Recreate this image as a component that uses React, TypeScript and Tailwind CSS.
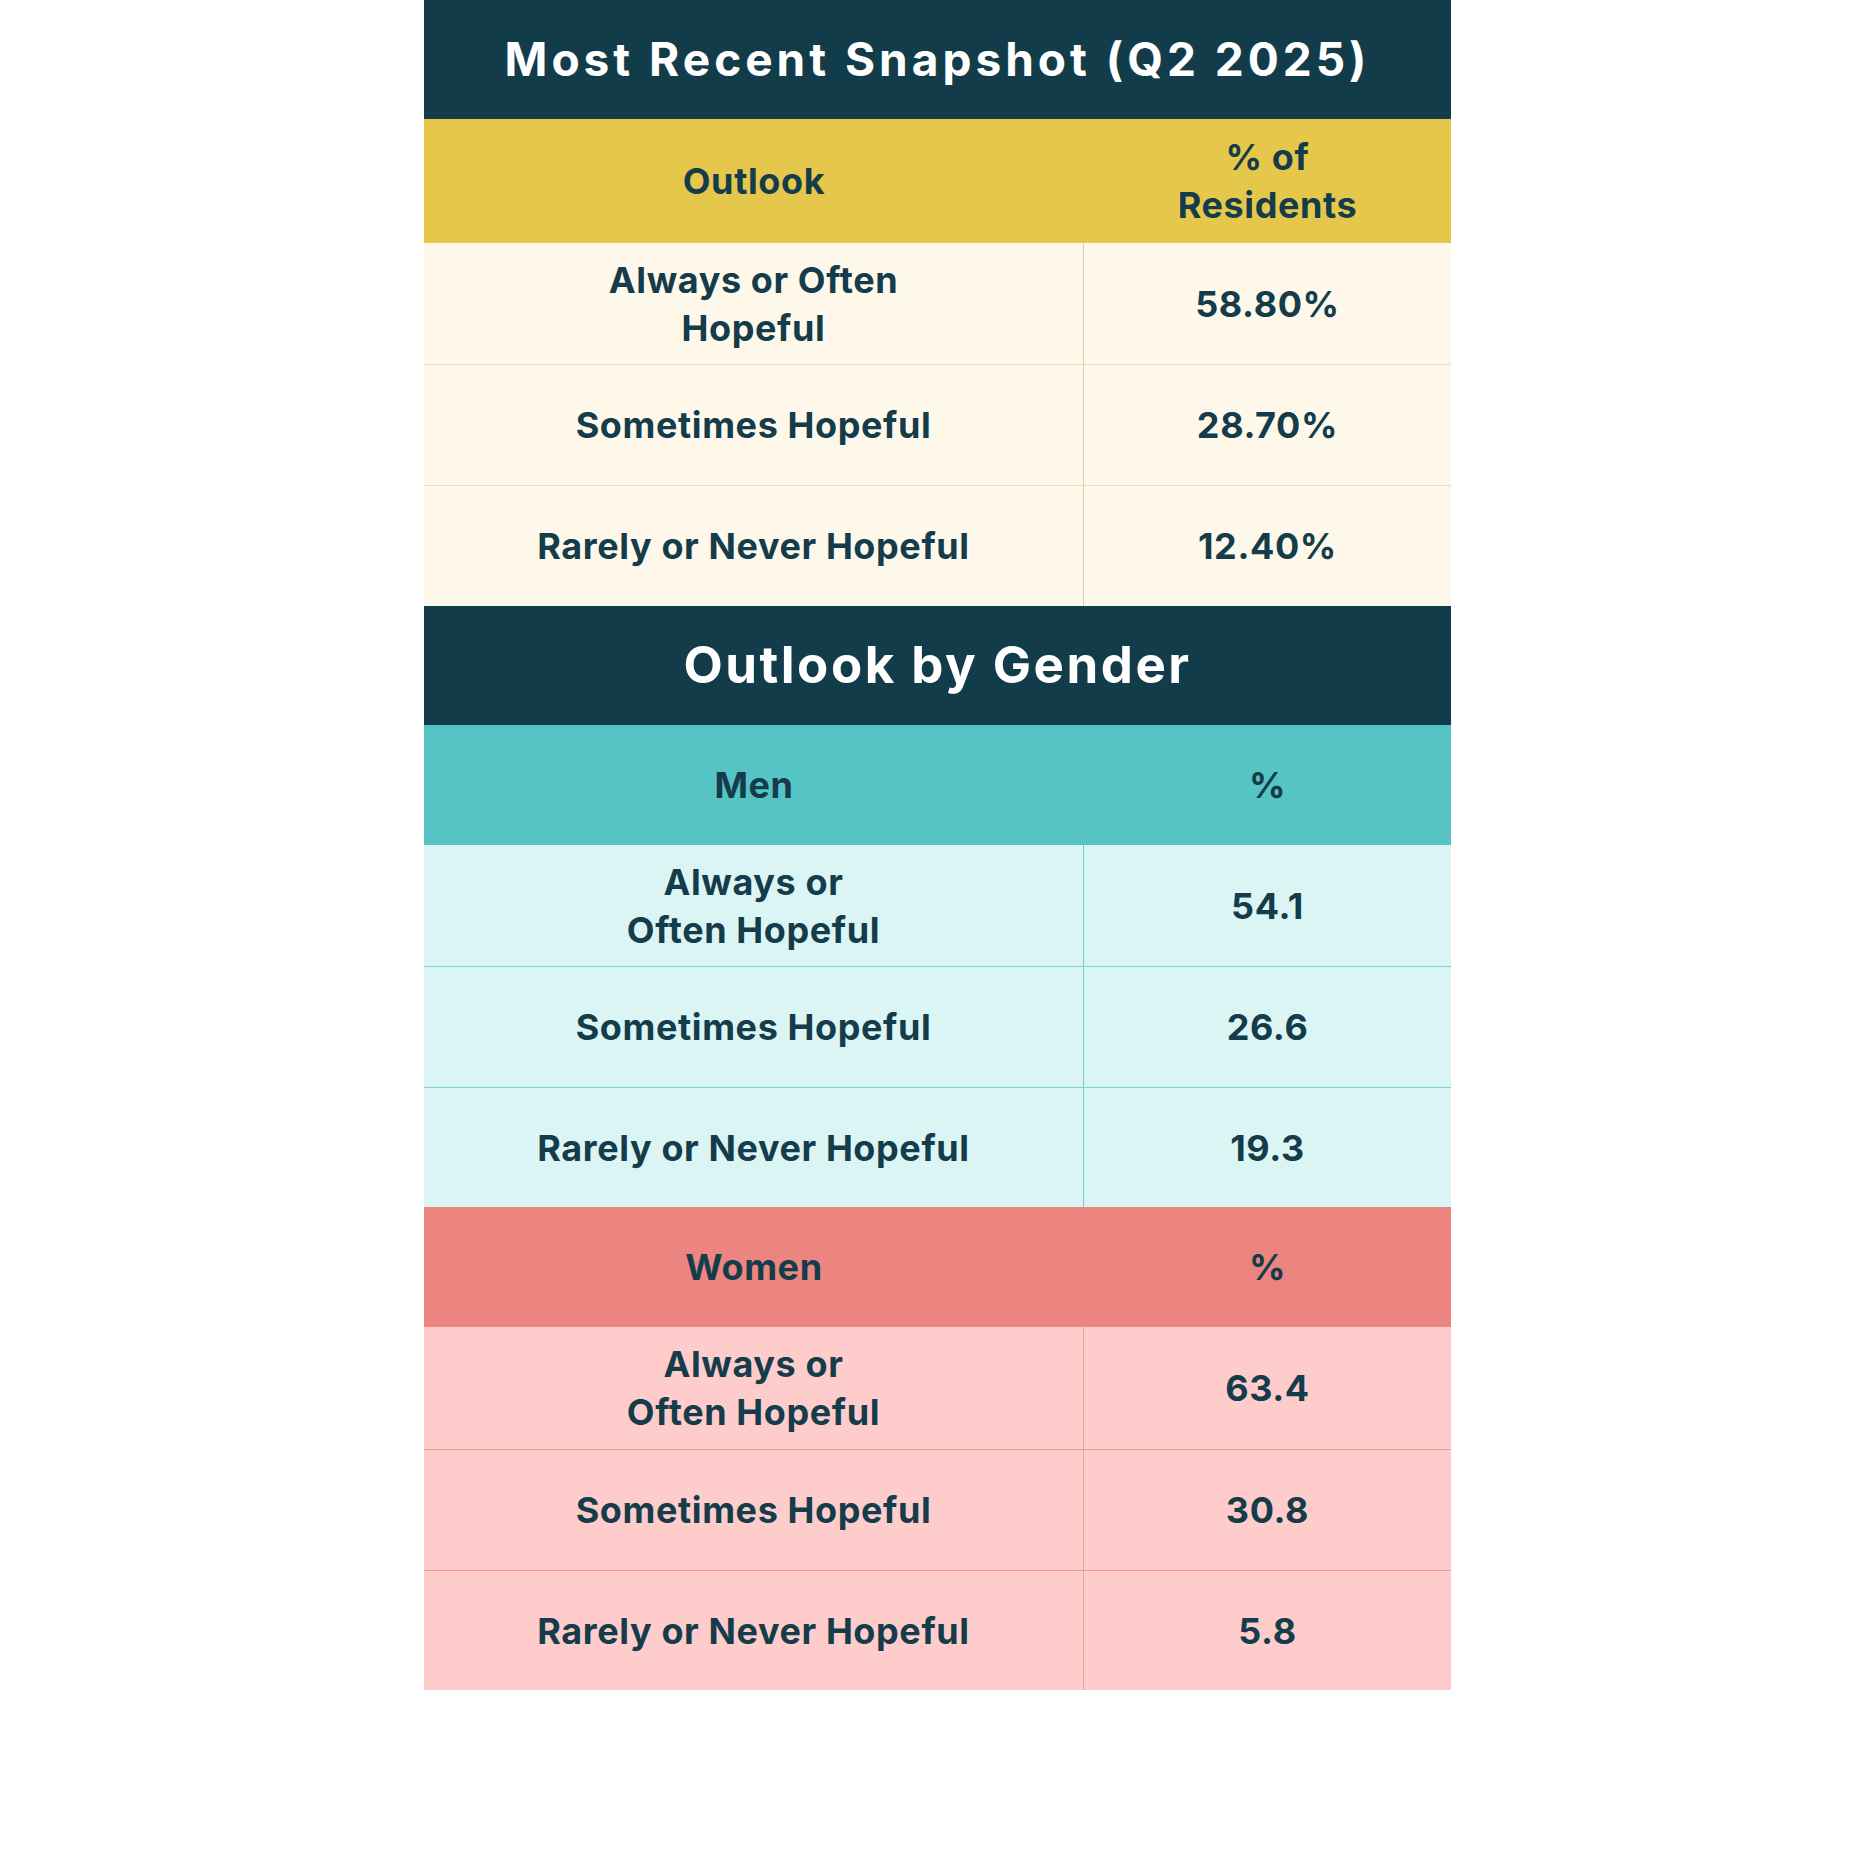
type Row = { label: React.ReactNode; value: string; h: string };

const font = { fontFamily: "Inter, 'Noto Sans', sans-serif" };

function Title({ text, h, size }: { text: string; h: string; size: string }) {
  return (
    <div className={`flex items-center justify-center bg-[#133c4a] text-white font-bold ${size} ${h}`}>
      {text}
    </div>
  );
}

function Section({
  head,
  rows,
  headBg,
  rowBg,
  line,
  vline,
  headH,
}: {
  head: [React.ReactNode, string];
  rows: Row[];
  headBg: string;
  rowBg: string;
  line: string;
  vline: string;
  headH: string;
}) {
  return (
    <div>
      <div className={`grid grid-cols-[660px_1fr] ${headBg} ${headH}`}>
        <div className="flex items-center justify-center text-center leading-[48px]">{head[0]}</div>
        <div className="flex items-center justify-center text-center leading-[48px]">{head[1]}</div>
      </div>
      {rows.map((r, i) => (
        <div
          key={i}
          className={`grid grid-cols-[660px_1fr] ${rowBg} ${r.h} ${i > 0 ? `border-t ${line}` : ""}`}
        >
          <div className={`flex items-center justify-center text-center leading-[48px] border-r ${vline}`}>
            {r.label}
          </div>
          <div className="flex items-center justify-center text-center">{r.value}</div>
        </div>
      ))}
    </div>
  );
}

export default function App() {
  return (
    <div className="w-[1875px] min-h-[1875px] bg-white" style={font}>
      <div className="w-[1027px] mx-auto text-[#143c4a] font-bold text-[36px] tracking-[0.6px]">
        <Title
          text="Most Recent Snapshot (Q2 2025)"
          h="h-[119px]"
          size="text-[46px] tracking-[4px]"
        />
        <Section
          head={[
            "Outlook",
            <span>
              % of
              <br />
              Residents
            </span>,
          ]}
          headBg="bg-[#e5c84b]"
          rowBg="bg-[#fef8ea]"
          line="border-[#e6dcc0]"
          vline="border-[#dccdaa]"
          headH="h-[124px]"
          rows={[
            {
              label: (
                <span>
                  Always or Often
                  <br />
                  Hopeful
                </span>
              ),
              value: "58.80%",
              h: "h-[121px]",
            },
            { label: "Sometimes Hopeful", value: "28.70%", h: "h-[121px]" },
            { label: "Rarely or Never Hopeful", value: "12.40%", h: "h-[121px]" },
          ]}
        />
        <Title text="Outlook by Gender" h="h-[119px]" size="text-[51px] tracking-[2.5px]" />
        <Section
          head={["Men", "%"]}
          headBg="bg-[#56c4c5]"
          rowBg="bg-[#dbf5f5]"
          line="border-[#7fd3d3]"
          vline="border-[#6fcccc]"
          headH="h-[120px]"
          rows={[
            {
              label: (
                <span>
                  Always or
                  <br />
                  Often Hopeful
                </span>
              ),
              value: "54.1",
              h: "h-[121px]",
            },
            { label: "Sometimes Hopeful", value: "26.6", h: "h-[121px]" },
            { label: "Rarely or Never Hopeful", value: "19.3", h: "h-[120px]" },
          ]}
        />
        <Section
          head={["Women", "%"]}
          headBg="bg-[#ec857f]"
          rowBg="bg-[#fecccb]"
          line="border-[#f39a94]"
          vline="border-[#f0a09a]"
          headH="h-[120px]"
          rows={[
            {
              label: (
                <span>
                  Always or
                  <br />
                  Often Hopeful
                </span>
              ),
              value: "63.4",
              h: "h-[122px]",
            },
            { label: "Sometimes Hopeful", value: "30.8", h: "h-[121px]" },
            { label: "Rarely or Never Hopeful", value: "5.8", h: "h-[120px]" },
          ]}
        />
      </div>
    </div>
  );
}
